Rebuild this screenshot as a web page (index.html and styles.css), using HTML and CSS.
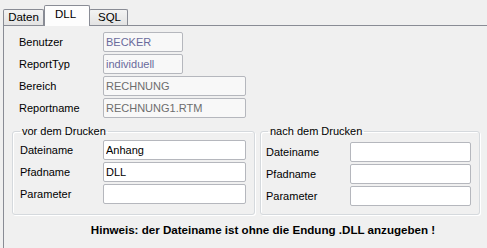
FILE: index.html
```html
<!DOCTYPE html>
<html lang="de">
<head>
<meta charset="utf-8">
<title>DLL</title>
<link rel="stylesheet" href="styles.css">
</head>
<body>
<div class="tabs">
  <div class="tab tab-daten">Daten</div>
  <div class="tab tab-active">DLL</div>
  <div class="tab tab-sql">SQL</div>
</div>
<div class="panel">
  <div class="rows">
    <div class="row"><span class="lbl">Benutzer</span><input class="field field-dis field-short" value="BECKER" readonly></div>
    <div class="row"><span class="lbl">ReportTyp</span><input class="field field-dis field-short" value="individuell" readonly></div>
    <div class="row"><span class="lbl">Bereich</span><input class="field field-ro field-long" value="RECHNUNG" readonly></div>
    <div class="row"><span class="lbl">Reportname</span><input class="field field-ro field-long" value="RECHNUNG1.RTM" readonly></div>
  </div>
  <div class="groups">
    <fieldset class="group group-left">
      <legend class="legend">vor dem Drucken</legend>
      <div class="row"><span class="lbl lbl-g">Dateiname</span><input class="field field-long" value="Anhang"></div>
      <div class="row"><span class="lbl lbl-g">Pfadname</span><input class="field field-long" value="DLL"></div>
      <div class="row"><span class="lbl lbl-g">Parameter</span><input class="field field-long" value=""></div>
    </fieldset>
    <fieldset class="group group-right">
      <legend class="legend legend-right">nach dem Drucken</legend>
      <div class="row"><span class="lbl">Dateiname</span><input class="field field-mid" value=""></div>
      <div class="row"><span class="lbl">Pfadname</span><input class="field field-mid" value=""></div>
      <div class="row"><span class="lbl">Parameter</span><input class="field field-mid" value=""></div>
    </fieldset>
  </div>
  <p class="hint">Hinweis: der Dateiname ist ohne die Endung .DLL anzugeben !</p>
</div>
</body>
</html>
```
FILE: styles.css
```css
html, body {
  margin: 0;
  padding: 0;
  background: #f0f0f0;
  overflow: hidden;
}
body {
  font-family: "Liberation Sans", Arial, sans-serif;
  font-size: 11px;
  color: #000;
  width: 487px;
  height: 248px;
}
.tabs {
  display: flex;
  align-items: flex-end;
  height: 25px;
  padding-left: 3px;
}
.tab {
  box-sizing: border-box;
  height: 16px;
  border: 1px solid #898c95;
  border-bottom: none;
  background: linear-gradient(#f3f3f3, #e3e3e3);
  border-radius: 2px 2px 0 0;
  text-align: center;
  line-height: 15px;
  font-size: 11.5px;
}
.tab-daten {
  width: 41px;
}
.tab-active {
  position: relative;
  z-index: 1;
  width: 46px;
  height: 21px;
  margin-bottom: -1px;
  background: #fdfdfd;
  line-height: 16px;
  padding-right: 3px;
}
.tab-sql {
  width: 39px;
  margin-left: -1px;
  padding-left: 2px;
}
.panel {
  box-sizing: border-box;
  width: 484px;
  height: 223px;
  margin-left: 3px;
  border-top: 1px solid #898c95;
  border-left: 1px solid #898c95;
  padding: 6px 0 0 8px;
}
.rows {
  display: flex;
  flex-direction: column;
  gap: 2px;
  padding-left: 7px;
}
.row {
  display: flex;
  align-items: center;
  height: 20px;
}
.group .row + .row {
  margin-top: 2px;
}
.lbl {
  width: 84px;
  flex: none;
  line-height: 14px;
}
.lbl-g {
  width: 83px;
}
.field {
  box-sizing: border-box;
  height: 20px;
  margin: 0;
  padding: 0 2px;
  border: 1px solid #b5b7bd;
  border-radius: 2px;
  background: #fff;
  font-family: "Liberation Sans", Arial, sans-serif;
  font-size: 11px;
  color: #000;
  outline: none;
}
.field-dis {
  background: #f8f8f8;
  color: #6a6a9c;
}
.field-ro {
  background: #f8f8f8;
  color: #6d6d6d;
}
.field-short {
  width: 80px;
}
.field-long {
  width: 143px;
}
.field-mid {
  width: 121px;
}
.groups {
  display: flex;
  gap: 5px;
  margin-top: 6px;
}
.group {
  margin: 0;
  min-width: 0;
  border: 1px solid #d5d9dd;
  border-radius: 3px;
  box-shadow: inset 1px 1px 0 #fff, 1px 1px 0 #fff;
}
.group-left {
  width: 243px;
  box-sizing: border-box;
  padding: 2px 8px 10px 7px;
}
.group-right {
  width: 220px;
  box-sizing: border-box;
  padding: 4px 8px 8px 5px;
}
.legend {
  padding: 0 2px;
  margin-left: 0;
  line-height: 14px;
}
.legend-right {
  margin-left: 2px;
}
.hint {
  margin: 8px 0 0;
  padding-left: 27px;
  text-align: center;
  font-weight: bold;
  font-size: 11.6px;
  line-height: 14px;
}
```
